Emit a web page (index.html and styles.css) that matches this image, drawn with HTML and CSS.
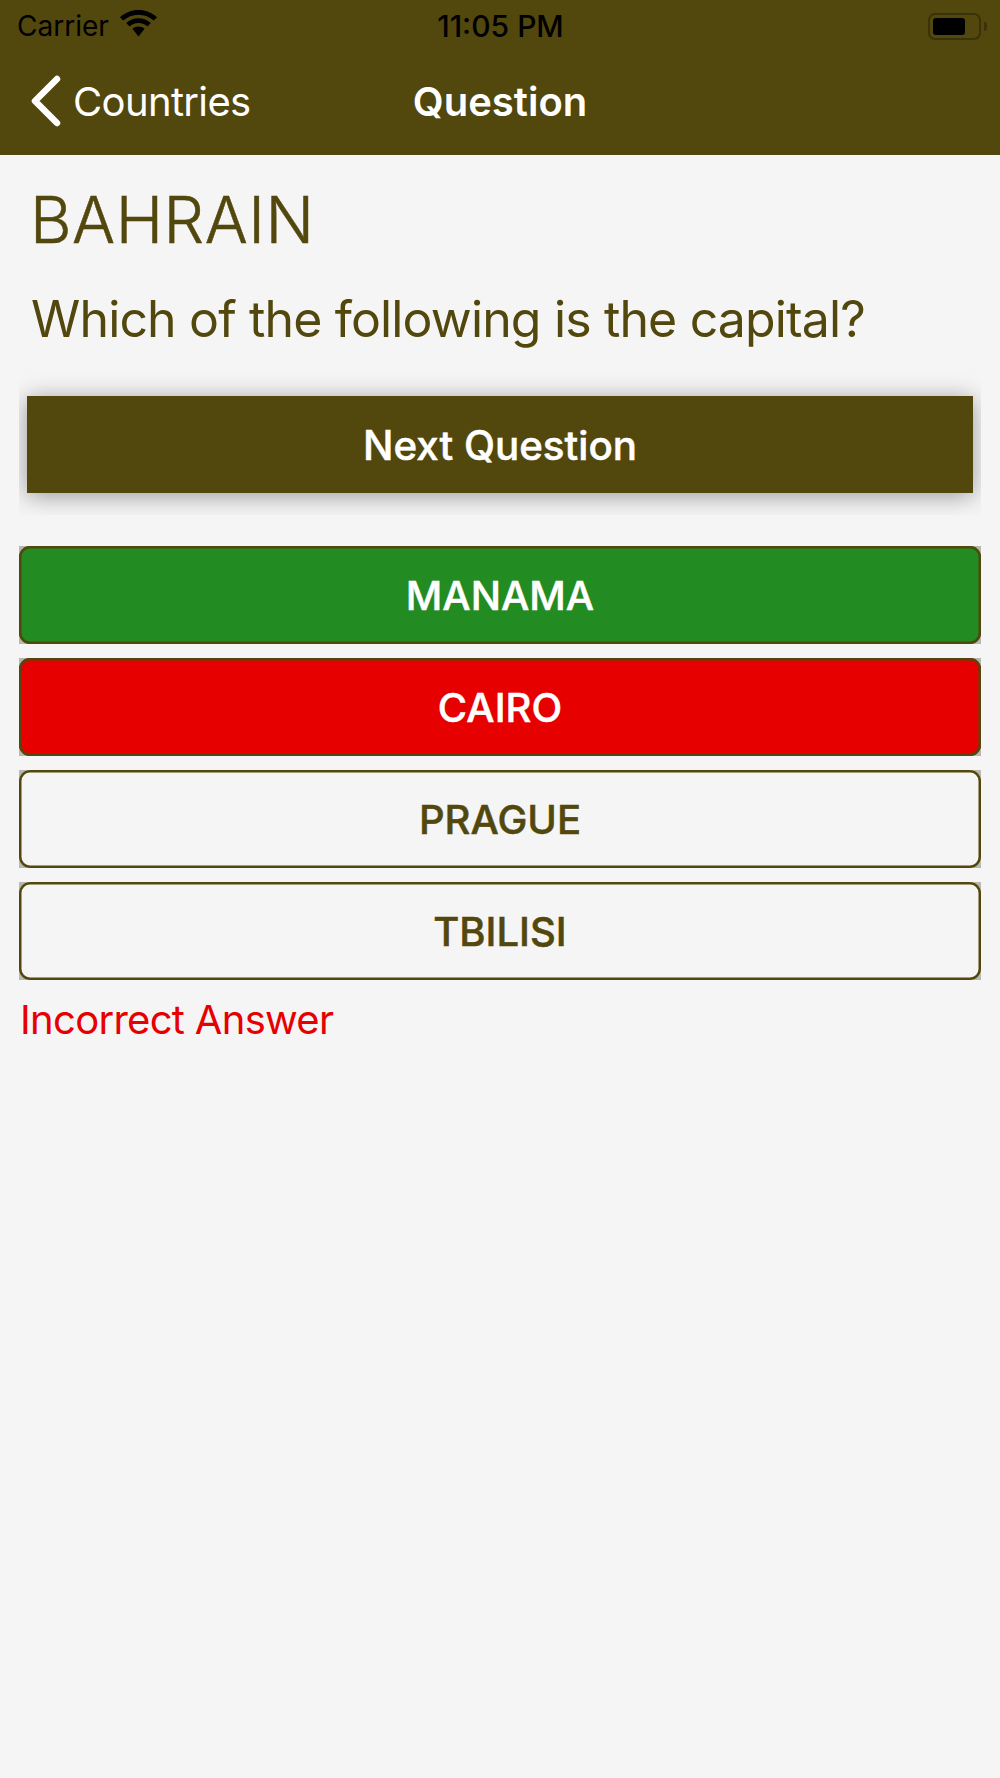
FILE: index.html
```html
<!DOCTYPE html>
<html>
    <head>
        <title>Question</title>
        <meta charset="utf-8"/>
        <link rel="stylesheet" href="styles.css">
    </head>
    <body>
        <div class="header">
            <div class="status-bar">
                <div class="status-left">
                    <span class="carrier">Carrier</span>
                    <svg class="wifi" width="37" height="27" viewBox="0 0 37 27">
                        <path d="M18.5 0C11.4 0 5 2.7 0 7.2L3.2 10.6C7.3 7 12.6 4.8 18.5 4.8S29.7 7 33.8 10.6L37 7.2C32 2.7 25.6 0 18.5 0Z"/>
                        <path d="M18.5 8.2C13.8 8.2 9.5 10 6.2 13L9.5 16.5C11.9 14.4 15 13 18.5 13S25.1 14.4 27.5 16.5L30.8 13C27.5 10 23.2 8.2 18.5 8.2Z"/>
                        <path d="M18.5 16.4C16.1 16.4 14 17.2 12.4 18.8L18.5 26.5L24.6 18.8C23 17.2 20.9 16.4 18.5 16.4Z"/>
                    </svg>
                </div>
                <div class="status-time">11:05 PM</div>
                <div class="battery">
                    <div class="battery-body"><div class="battery-level"></div></div>
                    <div class="battery-cap"></div>
                </div>
            </div>
            <div class="nav-bar">
                <a class="back" href="#">
                    <svg class="chevron" width="32" height="52" viewBox="0 0 32 52">
                        <path d="M27 4L5 26L27 48" fill="none" stroke="#fff" stroke-width="6.5" stroke-linecap="round" stroke-linejoin="round"/>
                    </svg>
                    <span>Countries</span>
                </a>
                <div class="nav-title">Question</div>
            </div>
        </div>

        <div class="content">
            <h1 class="country">BAHRAIN</h1>
            <p class="question">Which of the following is the capital?</p>

            <div class="next-wrap">
                <div class="next-btn">Next Question</div>
            </div>

            <div class="answers">
                <div class="answer-wrap"><div class="answer correct">MANAMA</div></div>
                <div class="answer-wrap"><div class="answer wrong">CAIRO</div></div>
                <div class="answer-wrap"><div class="answer">PRAGUE</div></div>
                <div class="answer-wrap"><div class="answer">TBILISI</div></div>
            </div>

            <div class="result">Incorrect Answer</div>
        </div>
    </body>
</html>
```

FILE: styles.css
```css
body {
    margin: 0;
    height: 1778px;
    overflow: hidden;
    background: #f5f5f5;
    font-family: Inter, "Liberation Sans", sans-serif;
}

.header {
    height: 155px;
    background: #52470d;
}

.status-bar {
    height: 52px;
    padding: 0 17px;
    display: flex;
    align-items: center;
    justify-content: space-between;
    color: #000;
    font-size: 28px;
}

.status-left {
    width: 300px;
    display: flex;
    align-items: center;
    gap: 11px;
}

.wifi {
    margin-top: -5px;
}

.status-time {
    margin-left: -3px;
    font-size: 30px;
    font-weight: 500;
}

.battery {
    width: 300px;
    margin-right: -4px;
    display: flex;
    align-items: center;
    justify-content: flex-end;
    gap: 3px;
}

.battery-body {
    width: 53px;
    height: 27px;
    box-sizing: border-box;
    padding: 3px;
    border: 2px solid #3a320a;
    border-radius: 7px;
}

.battery-level {
    width: 32px;
    height: 17px;
    background: #000;
    border-radius: 3px;
}

.battery-cap {
    width: 3px;
    height: 9px;
    background: #3a320a;
    border-radius: 0 3px 3px 0;
}

.nav-bar {
    height: 103px;
    display: flex;
    align-items: center;
    justify-content: center;
    color: #fff;
    font-size: 40px;
    position: relative;
}

.back {
    position: absolute;
    left: 30px;
    top: 23px;
    display: flex;
    align-items: center;
    gap: 11px;
    color: #fff;
    letter-spacing: -0.65px;
    text-decoration: none;
}

.nav-title {
    margin-top: -5px;
    font-weight: 600;
}

.content {
    padding: 0 19px;
}

.country {
    margin: 0;
    padding: 29px 11px 0;
    color: #52470d;
    font-size: 64px;
    line-height: 72px;
    letter-spacing: 0.5px;
    font-weight: 300;
    -webkit-text-stroke: 0.5px #52470d;
}

.question {
    margin: 0;
    padding: 34px 12px 1px;
    color: #52470d;
    font-size: 50px;
    line-height: 58px;
    letter-spacing: -0.85px;
    font-weight: 400;
}

.next-wrap {
    margin-top: 25px;
    padding: 22px 8px 22px;
    overflow: hidden;
}

.next-btn {
    height: 97px;
    padding-top: 2px;
    box-sizing: border-box;
    display: flex;
    align-items: center;
    justify-content: center;
    background: #52470d;
    color: #fff;
    font-size: 40.3px;
    font-weight: 500;
    -webkit-text-stroke: 0.5px #fff;
    box-shadow: 0 3px 22px rgba(0, 0, 0, 0.38);
}

.answers {
    margin-top: 31px;
    display: flex;
    flex-direction: column;
    gap: 14px;
}

.answer-wrap {
    height: 98px;
    background: #b8b8b0;
}

.answer {
    height: 100%;
    display: flex;
    align-items: center;
    justify-content: center;
    background: #f5f5f5;
    box-shadow: inset 0 0 0 2.5px #52470d;
    border-radius: 11px;
    color: #52470d;
    font-size: 40px;
    font-weight: 500;
    -webkit-text-stroke: 0.5px currentColor;
}

.answer.correct {
    background: #228b22;
    color: #fff;
}

.answer.wrong {
    background: #e60000;
    color: #fff;
}

.result {
    margin-top: 16px;
    padding-left: 1px;
    color: #e60000;
    font-size: 40px;
    line-height: 48px;
    letter-spacing: -0.7px;
}
```
